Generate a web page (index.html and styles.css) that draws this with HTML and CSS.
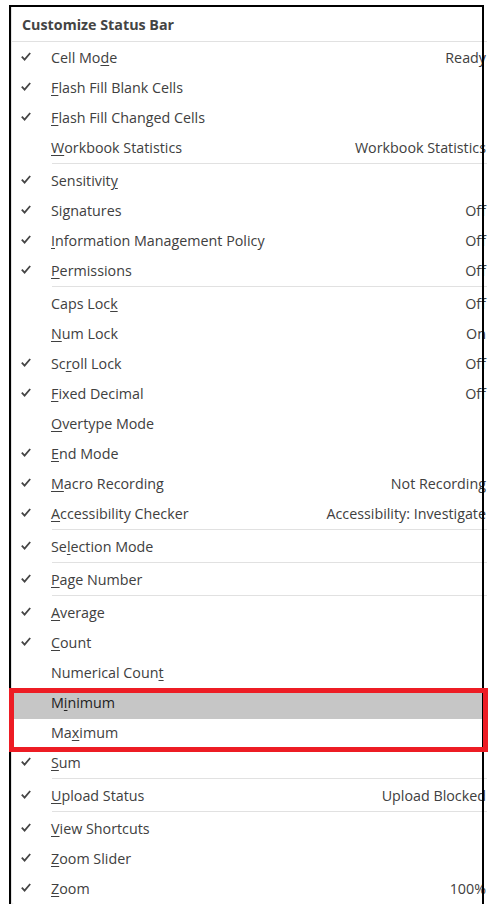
FILE: index.html
```html
<!DOCTYPE html>
<html>
<head>
<meta charset="utf-8">
<link rel="stylesheet" href="styles.css">
</head>
<body>
<div class="frame">
  <div class="menu">
    <div class="title">Customize Status Bar</div>
    <div class="sep full"></div>

    <div class="row on"><span class="chk"></span><span class="lbl">Cell Mo<u>d</u>e</span><span class="val">Ready</span></div>
    <div class="row on"><span class="chk"></span><span class="lbl"><u>F</u>lash Fill Blank Cells</span></div>
    <div class="row on"><span class="chk"></span><span class="lbl"><u>F</u>lash Fill Changed Cells</span></div>
    <div class="row"><span class="chk"></span><span class="lbl"><u>W</u>orkbook Statistics</span><span class="val">Workbook Statistics</span></div>
    <div class="sep"></div>

    <div class="row on"><span class="chk"></span><span class="lbl">Sensitivit<u>y</u></span></div>
    <div class="row on"><span class="chk"></span><span class="lbl">Si<u>g</u>natures</span><span class="val">Off</span></div>
    <div class="row on"><span class="chk"></span><span class="lbl"><u>I</u>nformation Management Policy</span><span class="val">Off</span></div>
    <div class="row on"><span class="chk"></span><span class="lbl"><u>P</u>ermissions</span><span class="val">Off</span></div>
    <div class="sep"></div>

    <div class="row"><span class="chk"></span><span class="lbl">Caps Loc<u>k</u></span><span class="val">Off</span></div>
    <div class="row"><span class="chk"></span><span class="lbl"><u>N</u>um Lock</span><span class="val">On</span></div>
    <div class="row on"><span class="chk"></span><span class="lbl">Sc<u>r</u>oll Lock</span><span class="val">Off</span></div>
    <div class="row on"><span class="chk"></span><span class="lbl"><u>F</u>ixed Decimal</span><span class="val">Off</span></div>
    <div class="row"><span class="chk"></span><span class="lbl"><u>O</u>vertype Mode</span></div>
    <div class="row on"><span class="chk"></span><span class="lbl"><u>E</u>nd Mode</span></div>
    <div class="row on"><span class="chk"></span><span class="lbl"><u>M</u>acro Recording</span><span class="val">Not Recording</span></div>
    <div class="row on"><span class="chk"></span><span class="lbl"><u>A</u>ccessibility Checker</span><span class="val">Accessibility: Investigate</span></div>
    <div class="sep"></div>

    <div class="row on"><span class="chk"></span><span class="lbl">Se<u>l</u>ection Mode</span></div>
    <div class="sep"></div>

    <div class="row on"><span class="chk"></span><span class="lbl"><u>P</u>age Number</span></div>
    <div class="sep"></div>

    <div class="row on"><span class="chk"></span><span class="lbl"><u>A</u>verage</span></div>
    <div class="row on"><span class="chk"></span><span class="lbl"><u>C</u>ount</span></div>
    <div class="row"><span class="chk"></span><span class="lbl">Numerical Coun<u>t</u></span></div>
    <div class="mark">
      <div class="row hot"><span class="chk"></span><span class="lbl">M<u>i</u>nimum</span></div>
      <div class="row"><span class="chk"></span><span class="lbl">Ma<u>x</u>imum</span></div>
    </div>
    <div class="row on"><span class="chk"></span><span class="lbl"><u>S</u>um</span></div>
    <div class="sep"></div>

    <div class="row on"><span class="chk"></span><span class="lbl"><u>U</u>pload Status</span><span class="val">Upload Blocked</span></div>
    <div class="sep"></div>

    <div class="row on"><span class="chk"></span><span class="lbl"><u>V</u>iew Shortcuts</span></div>
    <div class="row on"><span class="chk"></span><span class="lbl"><u>Z</u>oom Slider</span></div>
    <div class="row on last"><span class="chk"></span><span class="lbl"><u>Z</u>oom</span><span class="val">100%</span></div>
  </div>
</div>
</body>
</html>
```

FILE: styles.css
```css
html, body {
  margin: 0;
  padding: 0;
  background: #ffffff;
}

body {
  font-family: "Segoe UI", "Open Sans", "Noto Sans", sans-serif;
  font-size: 14.3px;
  color: #404040;
}

.frame {
  position: relative;
  margin: 5px 0 0 9px;
  width: 471px;
  height: 897px;
  padding: 2px 0 0 2px;
}

.frame::after {
  content: "";
  position: absolute;
  left: 0;
  top: 0;
  width: 471px;
  height: 897px;
  border: 2px solid #000;
  z-index: 1;
  pointer-events: none;
}

.menu {
  width: 475px;
  border-left: 1px solid #e2e2e2;
  border-bottom: 1px solid #d4d4d4;
  border-bottom-left-radius: 3px;
  background: #fff;
}

.title {
  height: 32px;
  padding-top: 2px;
  line-height: 32px;
  padding-left: 10px;
  font-weight: 700;
  color: #444;
}

.sep {
  height: 1px;
  background: #e1e1e1;
  margin: -1px 0 3px 40px;
}

.sep.full {
  margin: 0 0 2px 0;
}

.row {
  display: flex;
  align-items: flex-start;
  height: 30px;
  line-height: 28px;
  white-space: nowrap;
}

.row.last {
  height: 29px;
}

.chk {
  width: 39px;
  height: 30px;
  flex: none;
}

.row.on .chk {
  background: no-repeat 9px 8px / 10px 9px url("data:image/svg+xml;utf8,<svg xmlns='http://www.w3.org/2000/svg' viewBox='0 0 10 9'><path d='M0.8 4.6 L3.6 7.6 L9.2 1' fill='none' stroke='%23454545' stroke-width='1.8'/></svg>");
}

.lbl {
  flex: 1;
}

.lbl u {
  text-underline-offset: 2px;
}

.val {
  padding-right: 1px;
  text-align: right;
}

.row.hot {
  background: #c6c6c6;
  color: #222;
}

.mark {
  position: relative;
}

.mark::after {
  content: "";
  position: absolute;
  left: -3px;
  right: -1px;
  top: -1px;
  bottom: -3px;
  border: 5px solid #ed1c24;
  z-index: 2;
  pointer-events: none;
}
```
